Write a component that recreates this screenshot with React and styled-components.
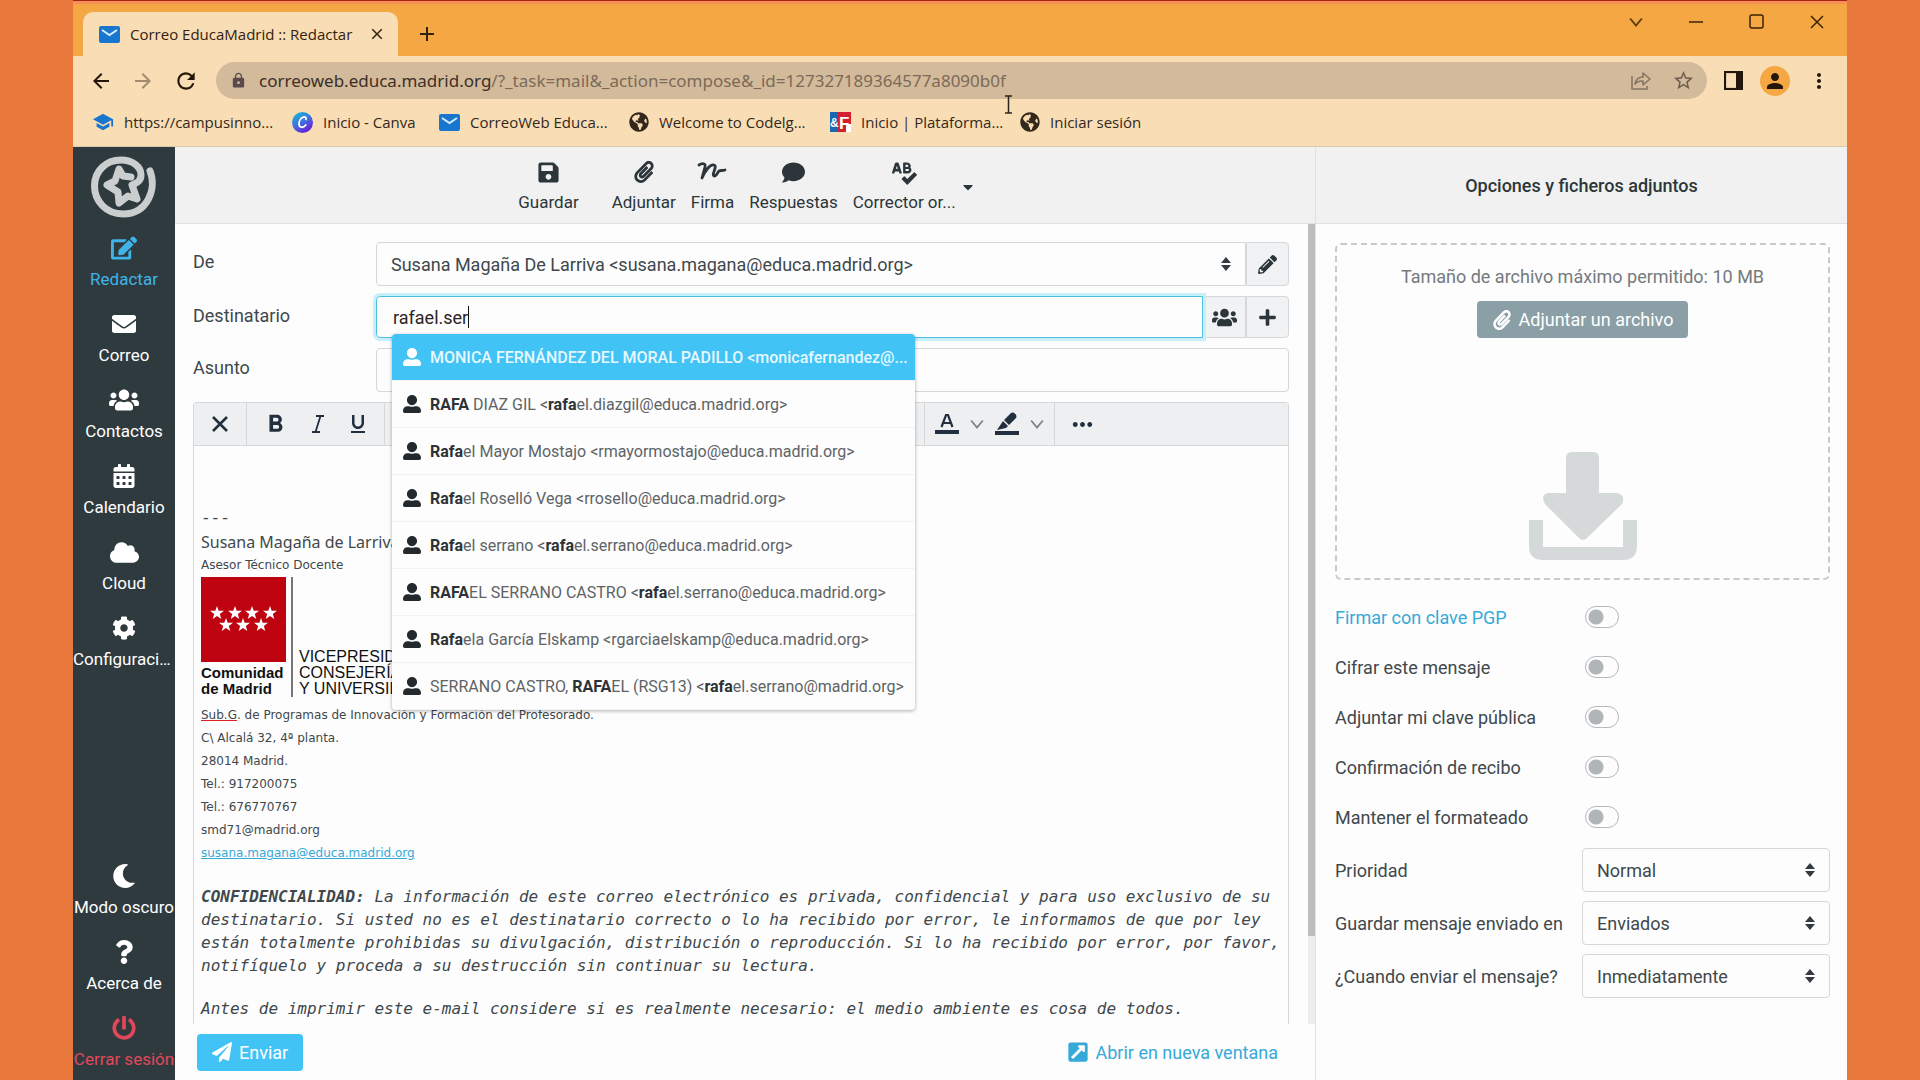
import React, { useState } from 'react'
import styled, { createGlobalStyle } from 'styled-components';
import {
  FaCalendarAlt, FaCaretDown, FaCloud, FaCog, FaComment, FaEdit, FaEnvelope,
  FaExternalLinkSquareAlt, FaGlobeAmericas, FaMoon, FaPaperclip, FaPaperPlane,
  FaPencilAlt, FaPlus, FaPowerOff, FaQuestion, FaSave, FaSpellCheck,
  FaUserAlt, FaUsers,
} from 'react-icons/fa';
import {
  MdAdd, MdArrowBack, MdArrowForward, MdClose, MdFormatBold, MdFormatUnderlined,
  MdLock, MdMoreHoriz, MdMoreVert, MdPerson, MdRefresh, MdSchool, MdStarBorder,
} from 'react-icons/md';

const MainMenu = [
  { name: 'Redactar', Icon: FaEdit, color: '#3fb4e8', size: 26 },
  { name: 'Correo', Icon: FaEnvelope },
  { name: 'Contactos', Icon: FaUsers, size: 30 },
  { name: 'Calendario', Icon: FaCalendarAlt },
  { name: 'Cloud', Icon: FaCloud, size: 29 },
  { name: 'Configuración', Icon: FaCog },
];

const BottomMenu = [
  { name: 'Modo oscuro', Icon: FaMoon },
  { name: 'Acerca de', Icon: FaQuestion },
  { name: 'Cerrar sesión', Icon: FaPowerOff, color: '#e0485a' },
];

const Contacts = [
  ['MONICA FERNÁNDEZ DEL MORAL PADILLO <monicafernandez@...'],
  ['', 'RAFA', ' DIAZ GIL <', 'rafa', 'el.diazgil@educa.madrid.org>'],
  ['', 'Rafa', 'el Mayor Mostajo <rmayormostajo@educa.madrid.org>'],
  ['', 'Rafa', 'el Roselló Vega <rrosello@educa.madrid.org>'],
  ['', 'Rafa', 'el serrano <', 'rafa', 'el.serrano@educa.madrid.org>'],
  ['', 'RAFA', 'EL SERRANO CASTRO <', 'rafa', 'el.serrano@educa.madrid.org>'],
  ['', 'Rafa', 'ela García Elskamp <rgarciaelskamp@educa.madrid.org>'],
  ['SERRANO CASTRO, ', 'RAFA', 'EL (RSG13) <', 'rafa', 'el.serrano@madrid.org>'],
];

const Switches = [
  { id: 'pgp', name: 'Firmar con clave PGP', link: true },
  { id: 'cifrar', name: 'Cifrar este mensaje' },
  { id: 'clave', name: 'Adjuntar mi clave pública' },
  { id: 'recibo', name: 'Confirmación de recibo' },
  { id: 'formato', name: 'Mantener el formateado' },
];

const Selects = [
  { id: 'prioridad', name: 'Prioridad', value: 'Normal' },
  { id: 'guardar', name: 'Guardar mensaje enviado en', value: 'Enviados' },
  { id: 'cuando', name: '¿Cuando enviar el mensaje?', value: 'Inmediatamente' },
];

const MailIcon = () => (
  <svg width="21" height="17" viewBox="0 0 21 17">
    <rect width="21" height="17" rx="2" fill="#1976cf" />
    <path d="M3 4l7.500 5L18 4" fill="none" stroke="#d9ecfb" strokeWidth="2" />
  </svg>
);

const CanvaIcon = () => (
  <svg width="21" height="21" viewBox="0 0 21 21">
    <defs>
      <linearGradient id="canva" x1="0" y1="0" x2="0.600" y2="1">
        <stop offset="0" stopColor="#12c4cc" />
        <stop offset="0.500" stopColor="#3a7be0" />
        <stop offset="1" stopColor="#6a1fd8" />
      </linearGradient>
    </defs>
    <circle cx="10.500" cy="10.500" r="10.500" fill="url(#canva)" />
    <path d="M14 7.500c.5-2-1-3-2.800-2.300C8.500 6.200 6.800 9.500 7 12.300c.2 3.500 4 4 6.800.7" fill="none" stroke="#fff" strokeWidth="1.800" strokeLinecap="round" />
  </svg>
);

const PlatformIcon = () => (
  <svg width="21" height="20" viewBox="0 0 21 20">
    <rect width="8" height="20" fill="#1c67b1" />
    <rect x="8" width="13" height="20" fill="#d3202e" />
    <path d="M16 20v-8h5v8z" fill="#fff" />
    <text x="0" y="15" fontFamily="Liberation Sans" fontWeight="700" fontSize="12" fill="#fff">&amp;</text>
    <text x="9" y="17" fontFamily="Liberation Sans" fontWeight="700" fontSize="17" fill="#fff">F</text>
  </svg>
);

const ShareIcon = () => (
  <svg width="22" height="20" viewBox="0 0 22 20" fill="none" stroke="#857562" strokeWidth="1.600">
    <path d="M2 5v13h15v-3" />
    <path d="M5 13c1-5 4-7 8-7V2l7 6-7 6v-4c-3 0-6 0-8 3z" strokeLinejoin="round" />
  </svg>
);

const StarLogo = () => (
  <svg width="66" height="62" viewBox="0 0 66 62" fill="none" stroke="#cbcecf" strokeLinecap="round" strokeLinejoin="round">
    <path d="M59 15C66 32 57 58 32 58 15 58 3.500 45 3.500 30 3.500 15 15 4 30 4c12 0 20 7 20 15 0 6-4 8-9 10l5 14-9-3-9 7-1-11-11-7 8-4 4-12 4 7 8 1" strokeWidth="7" />
  </svg>
);

const FlagLogo = () => (
  <svg width="85" height="85" viewBox="0 0 85 85">
    <rect width="85" height="85" fill="#bf0411" />
    {[[16, 36], [34, 36], [51, 36], [69, 36], [25, 48], [42, 48], [60, 48]].map(([x, y]) => (
      <path
        key={`${x}-${y}`}
        transform={`translate(${x} ${y})`}
        d="M0-7l1.700 4.800H7L2.800.9l1.500 5L0 2.900-4.300 5.900-2.800.9-7-2.200h5.300z"
        fill="#fff"
      />
    ))}
  </svg>
);

const SignIcon = () => (
  <svg width="30" height="20" viewBox="0 0 30 20" fill="none" stroke="#2c363a" strokeWidth="2.800" strokeLinecap="round" strokeLinejoin="round">
    <path d="M2 4c3-2 7-2 6 2L5 17C8 10 13 3 17 4c4 1-3 10 0 11 3 0 3-3 5-5 2-1 3 0 6-1" />
  </svg>
);

const SortIcon = () => (
  <svg width="10" height="14" viewBox="0 0 10 14" fill="#343a40">
    <path d="M5 0l5 6H0zM5 14l5-6H0z" />
  </svg>
);

const ItalicIcon = () => (
  <svg width="14" height="18" viewBox="0 0 14 18" fill="none" stroke="#222f3e" strokeWidth="1.800">
    <path d="M5 1h8M1 17h8M9.500 1l-5 16" />
  </svg>
);

const CrossIcon = () => (
  <svg width="16" height="16" viewBox="0 0 16 16" stroke="#222f3e" strokeWidth="2.600">
    <path d="M1 1l14 14M15 1L1 15" />
  </svg>
);

const ColorIcon = () => (
  <svg width="24" height="22" viewBox="0 0 24 22" fill="none" stroke="#222f3e">
    <path d="M6.500 14L11 2h2l4.500 12M8.500 10h7" strokeWidth="2.200" />
    <path d="M0 19h24" strokeWidth="4" />
  </svg>
);

const MarkerIcon = () => (
  <svg width="24" height="24" viewBox="0 0 24 24" fill="#222f3e">
    <path d="M9 8l7-7c2-2 7 2 5 5l-7 7zM8 9l5 5-2 2-9 2 4-6z" />
    <rect y="19" width="24" height="4" />
  </svg>
);

const Chevron = ({ size = 12, color = '#7d858c' }) => (
  <svg width={size} height={size} viewBox="0 0 12 12" fill="none" stroke={color} strokeWidth="1.600">
    <path d="M1 3l5 6 5-6" />
  </svg>
);

const DownloadIcon = () => (
  <svg width="108" height="108" viewBox="0 0 108 108" fill="#d5d9da">
    <path d="M43 0h21q6 0 6 6v35h18q9 2 5 11L58 86q-4 4-8 0L16 52q-5-9 3-11h18V6q0-6 6-6z" />
    <path d="M0 68h14v27h80V68h14v26q0 14-14 14H14Q0 108 0 94z" />
  </svg>
);

const BeamCursor = () => (
  <svg width="9" height="19" viewBox="0 0 9 19" fill="none" stroke="#2b241c" strokeWidth="1.500">
    <path d="M1 1h7M1 18h7M4.500 1v17" />
  </svg>
);

const MenuList = ({ items }) => (
  <div>
    {items.map(({ name, Icon, color, size = 24 }) => (
      <MenuItem key={name} href="#" color={color}>
        <MenuIcon><Icon size={size} /></MenuIcon>
        <MenuName>{name}</MenuName>
      </MenuItem>
    ))}
  </div>
);

const App = () => {
  const [to, setTo] = useState('rafael.ser');

  return (
    <Screen>
      <GlobalStyle />
      <Browser>
        <TabStrip>
          <Tab>
            <MailIcon />
            <TabTitle>Correo EducaMadrid :: Redactar</TabTitle>
            <PlainBtn aria-label="Cerrar pestaña"><MdClose size={18} /></PlainBtn>
          </Tab>
          <NewTab aria-label="Nueva pestaña"><MdAdd size={24} /></NewTab>
          <WindowBtns>
            <PlainBtn aria-label="Buscar pestañas"><Chevron size={14} color="#5b3c12" /></PlainBtn>
            <PlainBtn aria-label="Minimizar">
              <svg width="14" height="14"><path d="M0 7h14" stroke="#3b2308" strokeWidth="1.500" /></svg>
            </PlainBtn>
            <PlainBtn aria-label="Maximizar">
              <svg width="15" height="15"><rect x="1" y="1" width="13" height="13" rx="2" fill="none" stroke="#3b2308" strokeWidth="1.500" /></svg>
            </PlainBtn>
            <PlainBtn aria-label="Cerrar">
              <svg width="14" height="14"><path d="M1 1l12 12M13 1L1 13" stroke="#3b2308" strokeWidth="1.500" /></svg>
            </PlainBtn>
          </WindowBtns>
        </TabStrip>
        <AddressRow>
          <NavBtns>
            <PlainBtn aria-label="Atrás"><MdArrowBack size={24} /></PlainBtn>
            <PlainBtn aria-label="Adelante" faded><MdArrowForward size={24} /></PlainBtn>
            <PlainBtn aria-label="Recargar"><MdRefresh size={26} /></PlainBtn>
          </NavBtns>
          <AddressBar>
            <MdLock size={17} color="#5a4a4c" />
            <Address>
              correoweb.educa.madrid.org<span>/?_task=mail&amp;_action=compose&amp;_id=127327189364577a8090b0f</span>
            </Address>
            <PlainBtn aria-label="Compartir"><ShareIcon /></PlainBtn>
            <PlainBtn aria-label="Favorito"><MdStarBorder size={23} color="#6d5e50" /></PlainBtn>
          </AddressBar>
          <PlainBtn aria-label="Panel lateral">
            <svg width="19" height="19"><rect x="1" y="1" width="17" height="17" fill="none" stroke="#23160a" strokeWidth="2.200" /><rect x="12" width="7" height="19" fill="#23160a" /></svg>
          </PlainBtn>
          <Avatar aria-label="Perfil"><MdPerson size={24} /></Avatar>
          <PlainBtn aria-label="Más"><MdMoreVert size={24} /></PlainBtn>
        </AddressRow>
        <Bookmarks>
          <Bookmark href="#" width="200px"><MdSchool size={22} color="#1976cf" />https://campusinno...</Bookmark>
          <Bookmark href="#" width="147px"><CanvaIcon />Inicio - Canva</Bookmark>
          <Bookmark href="#" width="190px"><MailIcon />CorreoWeb Educa...</Bookmark>
          <Bookmark href="#" width="201px"><FaGlobeAmericas size={20} />Welcome to Codelg...</Bookmark>
          <Bookmark href="#" width="190px"><PlatformIcon />Inicio | Plataforma...</Bookmark>
          <Bookmark href="#" width="130px"><FaGlobeAmericas size={20} />Iniciar sesión</Bookmark>
        </Bookmarks>

        <Mail>
          <Sidebar>
            <LogoBox><StarLogo /></LogoBox>
            <MenuList items={MainMenu} />
            <Spacer />
            <MenuList items={BottomMenu} />
          </Sidebar>

          <Compose>
            <Toolbar>
              <ToolBtn wide><FaSave size={23} /><span>Guardar</span></ToolBtn>
              <ToolBtn><FaPaperclip size={22} /><span>Adjuntar</span></ToolBtn>
              <ToolBtn><SignIcon /><span>Firma</span></ToolBtn>
              <ToolBtn><FaComment size={23} /><span>Respuestas</span></ToolBtn>
              <ToolBtn><FaSpellCheck size={25} /><span>Corrector or...</span></ToolBtn>
              <CaretBtn aria-label="Idiomas"><FaCaretDown size={16} /></CaretBtn>
            </Toolbar>
            <Scroller>
              <Form>
                <Row>
                  <FieldName htmlFor="from">De</FieldName>
                  <Group>
                    <SelectBox joined>
                      <select id="from">
                        <option>{'Susana Magaña De Larriva <susana.magana@educa.madrid.org>'}</option>
                      </select>
                      <SortIcon />
                    </SelectBox>
                    <SideBtn aria-label="Editar identidades"><FaPencilAlt size={19} /></SideBtn>
                  </Group>
                </Row>
                <Row>
                  <FieldName htmlFor="to">Destinatario</FieldName>
                  <Group short>
                    <Recipient>
                      <input id="to" value={to} size={to.length} onChange={(e) => setTo(e.target.value)} />
                      <Caret />
                    </Recipient>
                    <SideBtn aria-label="Contactos"><FaUsers size={25} /></SideBtn>
                    <SideBtn aria-label="Añadir"><FaPlus size={19} /></SideBtn>
                    <Suggestions>
                      {Contacts.map((parts, idx) => (
                        <Suggestion key={idx} selected={idx === 0}>
                          <FaUserAlt size={18} />
                          <SuggestionText>
                            {parts.map((part, i) => (i % 2 ? <b key={i}>{part}</b> : part))}
                          </SuggestionText>
                        </Suggestion>
                      ))}
                    </Suggestions>
                  </Group>
                </Row>
                <Row>
                  <FieldName htmlFor="subject">Asunto</FieldName>
                  <Subject id="subject" />
                </Row>
                <Editor>
                  <EditorBar>
                    <EditorGroup width="53px">
                      <PlainBtn aria-label="Texto plano"><CrossIcon /></PlainBtn>
                    </EditorGroup>
                    <EditorGroup width="138px">
                      <PlainBtn aria-label="Negrita"><MdFormatBold size={29} /></PlainBtn>
                      <PlainBtn aria-label="Cursiva"><ItalicIcon /></PlainBtn>
                      <PlainBtn aria-label="Subrayado"><MdFormatUnderlined size={24} /></PlainBtn>
                    </EditorGroup>
                    <EditorGroup width="540px" />
                    <EditorGroup width="130px">
                      <PlainBtn aria-label="Color"><ColorIcon /></PlainBtn>
                      <PlainBtn aria-label="Más colores"><Chevron size={14} /></PlainBtn>
                      <PlainBtn aria-label="Fondo"><MarkerIcon /></PlainBtn>
                      <PlainBtn aria-label="Más fondos"><Chevron size={14} /></PlainBtn>
                    </EditorGroup>
                    <EditorGroup width="54px" last>
                      <PlainBtn aria-label="Más opciones"><MdMoreHoriz size={29} /></PlainBtn>
                    </EditorGroup>
                  </EditorBar>
                  <Message>
                    <Dashes>---</Dashes>
                    <SenderName>Susana Magaña de Larriva</SenderName>
                    <Line>Asesor Técnico Docente</Line>
                    <Brand>
                      <BrandLeft>
                        <FlagLogo />
                        <span>Comunidad</span>
                        <span>de Madrid</span>
                      </BrandLeft>
                      <BrandRight>
                        <span>VICEPRESIDENCIA,</span>
                        <span>CONSEJERÍA DE EDUCACIÓN</span>
                        <span>Y UNIVERSIDADES</span>
                      </BrandRight>
                    </Brand>
                    <Line><u>Sub.G</u>. de Programas de Innovación y Formación del Profesorado.</Line>
                    <Line>C\ Alcalá 32, 4ª planta.</Line>
                    <Line>28014 Madrid.</Line>
                    <Line>Tel.: 917200075</Line>
                    <Line>Tel.: 676770767</Line>
                    <Line>smd71@madrid.org</Line>
                    <Line><a href="#">susana.magana@educa.madrid.org</a></Line>
                    <Legal>
                      <b>CONFIDENCIALIDAD:</b> La información de este correo electrónico es privada, confidencial
                      y para uso exclusivo de su destinatario. Si usted no es el destinatario correcto o lo ha
                      recibido por error, le informamos de que por ley están totalmente prohibidas su
                      divulgación, distribución o reproducción. Si lo ha recibido por error, por favor,
                      notifíquelo y proceda a su destrucción sin continuar su lectura.
                    </Legal>
                    <Legal>
                      Antes de imprimir este e-mail considere si es realmente necesario: el medio ambiente es
                      cosa de todos.
                    </Legal>
                  </Message>
                </Editor>
              </Form>
              <Track><Thumb /></Track>
            </Scroller>
            <Actions>
              <SendBtn><FaPaperPlane size={20} />Enviar</SendBtn>
              <OpenLink href="#"><FaExternalLinkSquareAlt size={22} />Abrir en nueva ventana</OpenLink>
            </Actions>
          </Compose>

          <Options>
            <OptionsTitle>Opciones y ficheros adjuntos</OptionsTitle>
            <OptionsBody>
              <DropZone>
                <p>Tamaño de archivo máximo permitido: 10 MB</p>
                <AttachBtn><FaPaperclip size={20} />Adjuntar un archivo</AttachBtn>
                <Spacer />
                <DownloadIcon />
              </DropZone>
              {Switches.map(({ id, name, link }) => (
                <SwitchRow key={id}>
                  <OptionName htmlFor={id}>{link ? <a href="#">{name}</a> : name}</OptionName>
                  <Switch id={id} type="checkbox" />
                </SwitchRow>
              ))}
              <SelectRows>
                {Selects.map(({ id, name, value }) => (
                  <SelectRow key={id}>
                    <OptionName htmlFor={id}>{name}</OptionName>
                    <SelectBox>
                      <select id={id}><option>{value}</option></select>
                      <SortIcon />
                    </SelectBox>
                  </SelectRow>
                ))}
              </SelectRows>
            </OptionsBody>
          </Options>
        </Mail>
        <Pointer><BeamCursor /></Pointer>
      </Browser>
    </Screen>
  );
}

export default App

const GlobalStyle = createGlobalStyle`
  * {
    box-sizing: border-box;
  }
  body {
    margin: 0;
    background-color: #e9783d;
    font-family: Roboto, sans-serif;
    font-size: 18px;
    color: #40484c;
  }
  button, input, select {
    font: inherit;
    color: inherit;
  }
  a {
    color: #35a9d8;
    text-decoration: none;
  }
`;

const Screen = styled.div`
  height: 100vh;
  padding: 0 73px;
`;

const Browser = styled.div`
  position: relative;
  display: flex;
  flex-direction: column;
  height: 100%;
  background-color: #fdfdfd;
`;

const PlainBtn = styled.button.withConfig({ shouldForwardProp: (p) => p !== 'faded' })`
  display: flex;
  align-items: center;
  justify-content: center;
  padding: 0;
  border: none;
  background: none;
  opacity: ${props => (props.faded ? 0.4 : 1)};
`;

const TabStrip = styled.div`
  display: flex;
  align-items: flex-end;
  height: 56px;
  padding-left: 10px;
  border-top: 1px solid #a32414;
  background-color: #f4a742;
  box-shadow: inset 0 3px 1px #f9905a;
  color: #33220f;
  font-family: "Open Sans", sans-serif;
`;

const Tab = styled.div`
  display: flex;
  align-items: center;
  width: 315px;
  height: 44px;
  padding: 0 12px 0 16px;
  border-radius: 10px 10px 0 0;
  background-color: #f9ddb5;
`;

const TabTitle = styled.span`
  flex: 1;
  padding-left: 10px;
  font-size: 15px;
  white-space: nowrap;
`;

const NewTab = styled(PlainBtn)`
  height: 44px;
  margin-left: 17px;
`;

const WindowBtns = styled.div`
  display: flex;
  align-self: flex-start;
  gap: 46px;
  margin-left: auto;
  padding: 13px 23px 0 0;
`;

const AddressRow = styled.div`
  display: flex;
  align-items: center;
  gap: 17px;
  height: 49px;
  padding: 0 16px;
  background-color: #f9ddb5;
  color: #23160a;
`;

const NavBtns = styled.div`
  display: flex;
  gap: 18px;
`;

const AddressBar = styled.div`
  display: flex;
  flex: 1;
  align-items: center;
  gap: 20px;
  height: 37px;
  padding: 0 12px 0 14px;
  border-radius: 19px;
  background-color: #d3ba9b;
`;

const Address = styled.span`
  flex: 1;
  margin-left: -8px;
  font-family: "Noto Sans", "Open Sans", sans-serif;
  font-size: 17px;
  color: #3b3028;
  span {
    color: #7b6a58;
  }
`;

const Avatar = styled(PlainBtn)`
  width: 30px;
  height: 30px;
  border-radius: 50%;
  background-color: #f4a742;
`;

const Bookmarks = styled.div`
  display: flex;
  align-items: center;
  height: 42px;
  padding: 0 0 7px 19px;
  border-bottom: 1px solid #dcc9ae;
  background-color: #f9ddb5;
  font-family: "Open Sans", sans-serif;
  font-size: 15px;
`;

const Bookmark = styled.a`
  display: flex;
  align-items: center;
  gap: 10px;
  width: ${props => props.width};
  color: #33281c;
  white-space: nowrap;
`;

const Pointer = styled.div`
  position: absolute;
  top: 95px;
  left: 931px;
  pointer-events: none;
`;

const Mail = styled.div`
  display: flex;
  flex: 1;
  min-height: 0;
`;

const Sidebar = styled.nav`
  display: flex;
  flex-direction: column;
  flex: none;
  width: 102px;
  background-color: #2f3a3f;
`;

const LogoBox = styled.div`
  display: flex;
  justify-content: center;
  padding: 9px 0 6px;
`;

const MenuItem = styled.a`
  display: flex;
  flex-direction: column;
  align-items: center;
  gap: 8px;
  height: 76px;
  padding: 12px 0 10px;
  color: ${props => props.color || '#fff'};
`;

const MenuIcon = styled.span`
  display: flex;
  align-items: center;
  height: 24px;
`;

const MenuName = styled.span`
  max-width: 100%;
  overflow: hidden;
  font-size: 17px;
  line-height: 22px;
  white-space: nowrap;
  text-overflow: ellipsis;
`;

const Spacer = styled.div`
  flex: 1;
`;

const Compose = styled.main`
  display: flex;
  flex: 1;
  flex-direction: column;
  min-width: 0;
`;

const Toolbar = styled.div`
  display: flex;
  align-items: center;
  justify-content: center;
  gap: 15px;
  flex: none;
  height: 77px;
  padding: 4px 0 0 4px;
  border-bottom: 1px solid #dfe1e2;
  background-color: #f1f1f1;
`;

const ToolBtn = styled.button.withConfig({ shouldForwardProp: (p) => p !== 'wide' })`
  display: flex;
  flex-direction: column;
  align-items: center;
  justify-content: space-between;
  height: 52px;
  margin-right: ${props => (props.wide ? '18px' : '0')};
  padding: 0;
  border: none;
  background: none;
  color: #2c363a;
  font-size: 17px;
  line-height: 22px;
`;

const CaretBtn = styled(PlainBtn)`
  margin-left: -11px;
  color: #2c363a;
`;

const Scroller = styled.div`
  display: flex;
  flex: 1;
  min-height: 0;
`;

const Form = styled.div`
  display: flex;
  flex: 1;
  flex-direction: column;
  gap: 10px;
  min-width: 0;
  padding: 18px 19px 0 18px;
`;

const Row = styled.div`
  display: flex;
`;

const FieldName = styled.label`
  flex: none;
  width: 183px;
  padding-top: 9px;
  line-height: 22px;
`;

const Group = styled.div.withConfig({ shouldForwardProp: (p) => p !== 'short' })`
  position: relative;
  display: flex;
  flex: 1;
  height: ${props => (props.short ? '42px' : '44px')};
`;

const SelectBox = styled.div.withConfig({ shouldForwardProp: (p) => p !== 'joined' })`
  display: grid;
  flex: 1;
  align-items: center;
  select {
    grid-area: 1 / 1;
    width: 100%;
    height: 44px;
    padding: 0 14px;
    appearance: none;
    border: 1px solid #d4d8da;
    border-radius: ${props => (props.joined ? '4px 0 0 4px' : '4px')};
    background-color: #fdfdfd;
  }
  svg {
    grid-area: 1 / 1;
    justify-self: end;
    margin-right: 15px;
    pointer-events: none;
  }
`;

const SideBtn = styled.button`
  display: flex;
  align-items: center;
  justify-content: center;
  width: 43px;
  border: 1px solid #d4d8da;
  border-left-width: 0;
  background-color: #f1f2f3;
  color: #2c363a;
  &:last-of-type {
    border-left-width: 1px;
    border-radius: 0 4px 4px 0;
  }
`;

const Recipient = styled.label`
  z-index: 1;
  display: flex;
  flex: 1;
  align-items: center;
  padding-left: 16px;
  border: 1px solid #4fbfdf;
  border-radius: 4px 0 0 4px;
  box-shadow: 0 0 0 3px #c5effa;
  color: #2c2426;
  input {
    field-sizing: content;
    padding: 0;
    border: none;
    outline: none;
    background: none;
    caret-color: transparent;
  }
`;

const Caret = styled.span`
  width: 1px;
  height: 22px;
  background-color: #111;
`;

const Suggestions = styled.ul`
  position: absolute;
  z-index: 2;
  top: 38px;
  left: 16px;
  width: 523px;
  margin: 0;
  padding: 0;
  overflow: hidden;
  border-radius: 4px;
  background-color: #fdfdfd;
  box-shadow: 0 1px 3px 1px rgba(0, 0, 0, 0.2);
  list-style: none;
`;

const Suggestion = styled.li.withConfig({ shouldForwardProp: (p) => p !== 'selected' })`
  display: flex;
  align-items: center;
  gap: 9px;
  height: 47px;
  padding: 0 4px 0 11px;
  border-bottom: 1px solid #f1f2f3;
  background-color: ${props => (props.selected ? '#41c3f6' : 'transparent')};
  color: ${props => (props.selected ? '#e6f8ff' : '#5d6366')};
  font-weight: ${props => (props.selected ? 500 : 400)};
  svg {
    flex: none;
    color: ${props => (props.selected ? '#fff' : '#23292c')};
  }
  b {
    color: #2c3235;
  }
`;

const SuggestionText = styled.span`
  overflow: hidden;
  font-size: 16px;
  white-space: nowrap;
  text-overflow: ellipsis;
`;

const Subject = styled.input`
  flex: 1;
  height: 44px;
  padding: 0 14px;
  border: 1px solid #d4d8da;
  border-radius: 4px;
  background-color: #fdfdfd;
`;

const Editor = styled.div`
  display: flex;
  flex: 1;
  flex-direction: column;
  min-height: 0;
  border: 1px solid #d4d8da;
  border-bottom: none;
  border-radius: 4px 4px 0 0;
`;

const EditorBar = styled.div`
  display: flex;
  flex: none;
  height: 43px;
  border-bottom: 1px solid #d4d8da;
  background-color: #eeeff1;
  color: #222f3e;
`;

const EditorGroup = styled.div.withConfig({ shouldForwardProp: (p) => p !== 'last' })`
  display: flex;
  align-items: center;
  justify-content: space-around;
  width: ${props => props.width};
  padding: 0 4px;
  border-right: ${props => (props.last ? 'none' : '1px solid #d4d8da')};
`;

const Message = styled.div`
  flex: 1;
  min-height: 0;
  overflow: hidden;
  padding: 62px 7px 0;
`;

const Dashes = styled.div`
  font-family: "Liberation Mono", monospace;
  font-size: 16px;
  line-height: 23px;
`;

const SenderName = styled.div`
  font-family: "Noto Sans", sans-serif;
  font-size: 16px;
  line-height: 23px;
`;

const Line = styled.div`
  font-family: "DejaVu Sans", sans-serif;
  font-size: 12px;
  line-height: 23px;
  u {
    text-decoration-color: #e02020;
  }
  a {
    text-decoration: underline;
  }
`;

const Brand = styled.div`
  display: flex;
  height: 120px;
  margin-bottom: 7px;
  color: #111;
  font-family: "Liberation Sans", sans-serif;
  font-size: 16px;
  line-height: 16px;
  white-space: nowrap;
`;

const BrandLeft = styled.div`
  display: flex;
  flex-direction: column;
  width: 92px;
  border-right: 2px solid #777;
  font-size: 15px;
  font-weight: 700;
  svg {
    margin-bottom: 3px;
  }
`;

const BrandRight = styled.div`
  display: flex;
  flex-direction: column;
  justify-content: flex-end;
  padding-left: 6px;
`;

const Legal = styled.p`
  margin: 20px 0 0;
  font-family: "DejaVu Sans Mono", monospace;
  font-size: 16px;
  font-style: italic;
  line-height: 23px;
`;

const Track = styled.div`
  width: 7px;
  background-color: #ededed;
`;

const Thumb = styled.div`
  height: 89%;
  background-color: #bdbdbd;
`;

const Actions = styled.div`
  display: flex;
  align-items: center;
  justify-content: space-between;
  flex: none;
  height: 56px;
  padding: 0 37px 0 22px;
`;

const SendBtn = styled.button`
  display: flex;
  align-items: center;
  gap: 7px;
  height: 37px;
  padding: 0 15px;
  border: none;
  border-radius: 4px;
  background-color: #41c3f6;
  color: #fff;
`;

const OpenLink = styled.a`
  display: flex;
  align-items: center;
  gap: 7px;
`;

const Options = styled.aside`
  flex: none;
  width: 532px;
  border-left: 1px solid #dfe1e2;
`;

const OptionsTitle = styled.h2`
  display: flex;
  align-items: center;
  justify-content: center;
  height: 77px;
  margin: 0;
  border-bottom: 1px solid #dfe1e2;
  background-color: #f1f1f1;
  color: #2c363a;
  font-size: 18px;
  font-weight: 500;
`;

const OptionsBody = styled.div`
  padding: 19px 17px 0 19px;
`;

const DropZone = styled.div`
  display: flex;
  flex-direction: column;
  align-items: center;
  height: 337px;
  margin-bottom: 12px;
  padding: 20px 0 18px;
  border: 2px dashed #c6cacc;
  border-radius: 6px;
  color: #747a7d;
  p {
    margin: 0 0 12px;
    line-height: 24px;
  }
`;

const AttachBtn = styled(SendBtn)`
  background-color: #8b9fa6;
`;

const SwitchRow = styled.div`
  display: flex;
  align-items: center;
  height: 50px;
`;

const OptionName = styled.label`
  flex: none;
  width: 247px;
  white-space: nowrap;
`;

const Switch = styled.input`
  width: 34px;
  height: 22px;
  margin: 0 0 0 3px;
  appearance: none;
  border: 1px solid #b4b9bc;
  border-radius: 11px;
  background: radial-gradient(circle at 10px 10px, #b0b5b8 7px, transparent 8px);
  &:checked {
    background: radial-gradient(circle at 22px 10px, #41c3f6 7px, transparent 8px);
  }
`;

const SelectRows = styled.div`
  display: flex;
  flex-direction: column;
  gap: 9px;
  padding-top: 6px;
`;

const SelectRow = styled.div`
  display: flex;
  align-items: center;
`;
